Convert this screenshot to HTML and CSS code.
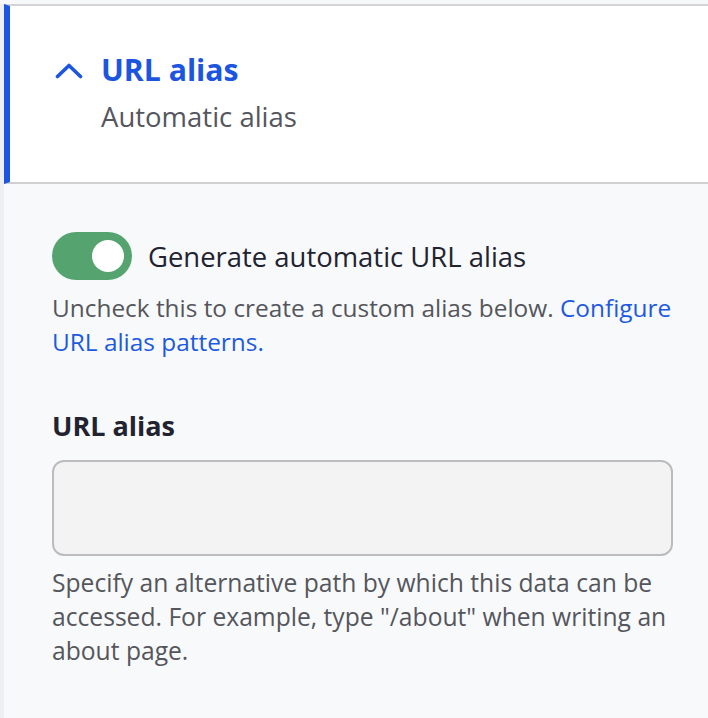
FILE: index.html
```html
<!DOCTYPE html>
<html lang="en">
<head>
<meta charset="utf-8">
<title>URL alias</title>
<link rel="stylesheet" href="styles.css">
</head>
<body>
<div class="page">
  <details class="panel" open>
    <summary class="panel-head">
      <svg class="chevron" width="28" height="16" viewBox="0 0 28 16" aria-hidden="true">
        <polyline points="2.5,13.5 14,2.5 25.5,13.5" fill="none" stroke="#1b55e0" stroke-width="3.6" stroke-linecap="round" stroke-linejoin="round"/>
      </svg>
      <span class="head-text">
        <span class="panel-title">URL alias</span>
        <span class="panel-summary">Automatic alias</span>
      </span>
    </summary>
    <div class="panel-body">
      <label class="switch-row">
        <span class="switch"><span class="knob"></span></span>
        <span class="switch-label">Generate automatic URL alias</span>
      </label>
      <p class="desc desc-first">Uncheck this to create a custom alias below. <a class="link" href="#">Configure URL alias patterns.</a></p>
      <div class="field">
        <div class="field-label">URL alias</div>
        <div class="input" aria-disabled="true"></div>
        <p class="desc desc-field">Specify an alternative path by which this data can be accessed. For example, type "/about" when writing an about page.</p>
      </div>
    </div>
  </details>
</div>
</body>
</html>
```
FILE: styles.css
```css
html, body {
  margin: 0;
  padding: 0;
  background: #f7f8fa;
}
body {
  font-family: "Open Sans", "Noto Sans", sans-serif;
  height: 718px;
  overflow: hidden;
}
.page {
  margin-top: 4px;
  border-left: 4px solid #eeeff2;
  min-height: 714px;
  background: #f8f9fb;
}
.panel {
  display: block;
}
.panel-head {
  list-style: none;
  display: flex;
  align-items: flex-start;
  background: #ffffff;
  border-top: 2px solid #d3d3d5;
  border-bottom: 2px solid #d0d0d2;
  border-left: 6px solid #1b55e0;
  padding: 44px 20px 47px 45px;
  cursor: pointer;
}
.panel-head::-webkit-details-marker { display: none; }
.chevron {
  flex: none;
  margin-top: 13px;
  margin-right: 18px;
}
.head-text {
  display: flex;
  flex-direction: column;
  gap: 9px;
}
.panel-title {
  color: #1b55e0;
  font-weight: 700;
  font-size: 30.2px;
  line-height: 40px;
}
.panel-summary {
  color: #55565e;
  font-size: 27.5px;
  line-height: 36px;
  margin-top: 0.3px;
}
.panel-body {
  padding: 48px 35px 0 48px;
}
.switch-row {
  display: flex;
  align-items: center;
  gap: 16px;
}
.switch {
  flex: none;
  width: 80px;
  height: 48px;
  border-radius: 24px;
  background: #55a46f;
  display: flex;
  align-items: center;
  justify-content: flex-end;
  padding-right: 8px;
  box-sizing: border-box;
}
.knob {
  width: 32px;
  height: 32px;
  border-radius: 50%;
  background: #ffffff;
}
.switch-label {
  color: #222330;
  font-size: 27.45px;
  line-height: 36px;
  padding-top: 2px;
}
.desc {
  margin: 0;
  color: #55565b;
  font-size: 24.4px;
  line-height: 34px;
}
.desc-first {
  margin-top: 10.5px;
}
.link {
  color: #1d59e0;
  text-decoration: none;
}
.field {
  margin-top: 49px;
}
.field-label {
  color: #222330;
  font-weight: 700;
  font-size: 27px;
  line-height: 36px;
}
.input {
  margin-top: 16.5px;
  height: 96px;
  box-sizing: border-box;
  border: 2px solid #bcbcbf;
  border-radius: 12px;
  background: #f3f3f3;
}
.desc-field {
  margin-top: 10px;
  font-size: 24.65px;
}
```
